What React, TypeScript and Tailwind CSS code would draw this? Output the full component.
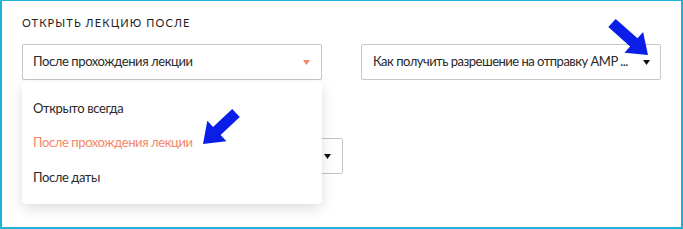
const font = { fontFamily: "Lato, 'Noto Sans', sans-serif" }

function arrowPoints(x1: number, y1: number, x2: number, y2: number, shaft = 5.5, head = 14, headLen = 19) {
  const dx = x2 - x1
  const dy = y2 - y1
  const len = Math.hypot(dx, dy)
  const ux = dx / len
  const uy = dy / len
  const px = -uy
  const py = ux
  const bx = x2 - ux * headLen
  const by = y2 - uy * headLen
  const pts = [
    [x1 + px * shaft, y1 + py * shaft],
    [bx + px * shaft, by + py * shaft],
    [bx + px * head, by + py * head],
    [x2, y2],
    [bx - px * head, by - py * head],
    [bx - px * shaft, by - py * shaft],
    [x1 - px * shaft, y1 - py * shaft],
  ]
  return pts.map(([x, y]) => `${x.toFixed(1)},${y.toFixed(1)}`).join(' ')
}

function Caret({ className }: { readonly className: string }) {
  return (
    <svg width="7" height="5" viewBox="0 0 7 5" className={className}>
      <path d="M0 0h7L3.5 5z" fill="currentColor" />
    </svg>
  )
}

export default function App() {
  return (
    <div
      className="relative h-[229px] w-[683px] overflow-hidden border-2 border-t border-[#1cb3d8] bg-white text-[#2a2a2a]"
      style={font}
    >
      <div className="pl-5 pt-[15px]">
        <div className="text-[11px] uppercase leading-[14px] tracking-[1.1px] text-[#1f1f1f]">
          Открыть лекцию после
        </div>

        <div className="mt-[14px] flex gap-[39px]">
          <div className="relative w-[300px]">
            <div className="flex h-[36px] items-center justify-between rounded-[2px] border border-[#c6c6c6] pl-[10px] pr-[11px] text-[13px] tracking-[-0.4px]">
              <span className="whitespace-nowrap">После прохождения лекции</span>
              <Caret className="text-[#f4866a]" />
            </div>

            <div className="absolute left-0 top-[38px] z-10 w-[300px] rounded-[4px] bg-white pb-[9px] pt-[9px] text-[13px] tracking-[-0.4px] shadow-[0_4px_14px_rgba(0,0,0,0.14)]">
              <div className="flex h-[34.5px] items-center px-[11px]">Открыто всегда</div>
              <div className="flex h-[34.5px] items-center px-[11px] text-[#f4866a]">После прохождения лекции</div>
              <div className="flex h-[34.5px] items-center px-[11px]">После даты</div>
            </div>
          </div>

          <div className="flex h-[36px] w-[300px] items-center justify-between rounded-[2px] border border-[#c6c6c6] pl-[11px] pr-[10px] text-[13px] tracking-[-0.5px]">
            <span className="whitespace-nowrap">Как получить разрешение на отправку AMP ...</span>
            <Caret className="text-[#111]" />
          </div>
        </div>

        <div className="mt-[58px] flex h-[36px] w-[321px] items-center justify-end rounded-[2px] border border-[#c6c6c6] pr-[11px]">
          <Caret className="text-[#111]" />
        </div>
      </div>

      <svg className="pointer-events-none absolute left-0 top-0 z-20" width="683" height="229">
        <polygon points={arrowPoints(610, 22, 646, 54)} fill="#0a1ee8" />
        <polygon points={arrowPoints(234, 112, 201, 143)} fill="#0a1ee8" />
      </svg>
    </div>
  )
}
